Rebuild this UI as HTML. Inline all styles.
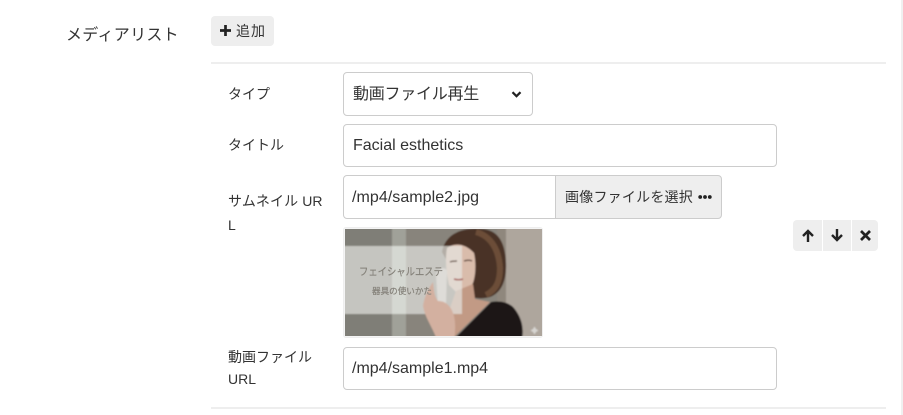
<!DOCTYPE html>
<html lang="ja"><head><meta charset="utf-8">
<style>
html,body{margin:0;padding:0;background:#fff}
body{width:903px;height:415px;position:relative;overflow:hidden;font-family:"Liberation Sans","Noto Sans CJK JP",sans-serif;color:#333}
.a{position:absolute;box-sizing:border-box;white-space:nowrap}
.l{font-size:14px;line-height:24px;left:228px}
.box{border:1px solid #ccc;border-radius:4px;background:#fff;font-size:16px;color:#333;padding-left:9px;display:flex;align-items:center}
svg{display:block}
</style></head><body>
<div class="a" style="left:901px;top:0;width:2px;height:415px;background:#f0f0f0"></div>
<div class="a" style="left:66px;top:24px;font-size:16px;line-height:24px;letter-spacing:.3px">メディアリスト</div>
<div class="a" style="left:211px;top:16px;width:63px;height:30px;background:#eee;border-radius:4px"></div>
<svg class="a" style="left:219px;top:24px" width="13" height="13" viewBox="0 0 13 13"><path d="M6.500 1v11M1 6.500h11" stroke="#222" stroke-width="2.700" fill="none"/></svg>
<div class="a" style="left:236px;top:20px;font-size:14px;line-height:22px;letter-spacing:1px">追加</div>
<div class="a" style="left:211px;top:62px;width:675px;height:2px;background:#eee"></div>

<div class="a l" style="top:82px">タイプ</div>
<div class="a box" style="left:343px;top:72px;width:190px;height:44px;padding-bottom:4px;letter-spacing:-.25px">動画ファイル再生</div>
<svg class="a" style="left:511px;top:90px" width="11" height="9" viewBox="0 0 11 9"><path d="M1.500 2.200l4 4 4-4" stroke="#222" stroke-width="2.200" fill="none"/></svg>

<div class="a l" style="top:133px">タイトル</div>
<div class="a box" style="left:343px;top:124px;width:434px;height:43px">Facial esthetics</div>

<div class="a l" style="top:189px;letter-spacing:.1px">サムネイル UR</div>
<div class="a l" style="top:213px">L</div>
<div class="a box" style="left:343px;top:175px;width:213px;height:44px;border-radius:4px 0 0 4px;padding-left:8px;padding-top:2px;letter-spacing:.05px">/mp4/sample2.jpg</div>
<div class="a box" style="left:555px;top:175px;width:167px;height:44px;background:#eee;border-radius:0 4px 4px 0;font-size:14px;letter-spacing:.22px">画像ファイルを選択</div>
<svg class="a" style="left:698px;top:193px" width="14" height="8" viewBox="0 0 14 8"><circle cx="2.200" cy="4" r="1.900" fill="#222"/><circle cx="7" cy="4" r="1.900" fill="#222"/><circle cx="11.800" cy="4" r="1.900" fill="#222"/></svg>

<div class="a" style="left:343px;top:227px;width:200px;height:111px;border:1px solid #eee;border-radius:3px;background:#fff;box-shadow:inset 0 0 0 1px #f4f4f4"></div>
<svg class="a" style="left:345px;top:229px" width="197" height="107" viewBox="345 229 197 107" font-family="'Liberation Sans','Noto Sans CJK JP',sans-serif">
<defs><filter id="b" x="-5%" y="-5%" width="110%" height="110%"><feGaussianBlur stdDeviation="0.7"/></filter><filter id="t"><feGaussianBlur stdDeviation="0.2"/></filter></defs>
<g filter="url(#b)">
<rect x="340" y="225" width="210" height="115" fill="#88847c"/>
<rect x="340" y="225" width="52" height="115" fill="#7f7e77"/>
<rect x="392" y="225" width="14" height="115" fill="#a0a199"/>
<rect x="497" y="225" width="10" height="115" fill="#8f877d"/>
<rect x="506" y="225" width="40" height="115" fill="#aea69d"/>
<path d="M442 252C445 234 462 227 482 229C498 230 505 242 506 262C507 281 501 293 490 297C480 300 470 298 464 292Z" fill="#4a3326"/>
<path d="M476 232C491 236 499 250 500 268C500 282 496 290 486 295" stroke="#78583f" stroke-width="6" fill="none" opacity=".75"/>
<path d="M447 248C455 242 466 244 474 253C476 262 476 274 473 283C468 291 461 294 456 292L449 285C446 272 445 258 447 248Z" fill="#d9bcab"/>
<path d="M456 291L473 284L475 299L490 302L455 336H440Z" fill="#c29a85"/>
<path d="M456 337L491 302C500 300 510 303 514 308C522 318 524 328 522 340H452Z" fill="#1b1918"/>
<rect x="340" y="246" width="122" height="68" fill="#e6e8e3" opacity=".68"/>
<rect x="392" y="246" width="14" height="68" fill="#f2f4f0" opacity=".2"/>
<path d="M436 274L439 270C443 267 447 268 447 272L446 305L438 308Z" fill="#dedcd8"/>
<path d="M423 306C424 298 428 289 433 282C434 290 434 296 438 301C445 301 451 305 454 316C456 324 455 334 454 340H437C433 328 425 318 423 306Z" fill="#d3b0a0"/>
<path d="M450 262c2-1 5-1 7-1M464 261c3-1 6-1 8 0" stroke="#5a4236" stroke-width="1.300" fill="none"/>
<path d="M454 279c3 1 6 1 9 0" stroke="#a8645e" stroke-width="1.500" fill="none"/>
<path d="M533 329l1.500-2.500 1.500 2.500 2.500 1.500-2.500 1.500-1.500 2.500-1.500-2.500-2.500-1.500z" fill="#d8d6d2"/>
</g>
<g filter="url(#t)" fill="#85827a" stroke="#85827a" stroke-width=".2">
<text x="359" y="275" font-size="10.500" textLength="84" lengthAdjust="spacingAndGlyphs">フェイシャルエステ</text>
<text x="372" y="294" font-size="8.800" textLength="60" lengthAdjust="spacingAndGlyphs">器具の使いかた</text>
</g>
</svg>

<div class="a" style="left:793px;top:220px;width:85px;height:31px;background:#eee;border-radius:4px"></div>
<div class="a" style="left:822px;top:220px;width:1px;height:31px;background:#fff"></div>
<div class="a" style="left:851px;top:220px;width:1px;height:31px;background:#fff"></div>
<svg class="a" style="left:801px;top:229px" width="14" height="14" viewBox="0 0 14 14"><path d="M7 13V2.500M2 7l5-5 5 5" stroke="#222" stroke-width="2.400" fill="none"/></svg>
<svg class="a" style="left:830px;top:228px" width="14" height="14" viewBox="0 0 14 14"><path d="M7 1v10.500M2 7l5 5 5-5" stroke="#222" stroke-width="2.400" fill="none"/></svg>
<svg class="a" style="left:859px;top:229px" width="13" height="13" viewBox="0 0 13 13"><path d="M2 2l9 9M11 2l-9 9" stroke="#222" stroke-width="2.700" fill="none"/></svg>

<div class="a l" style="top:345px">動画ファイル</div>
<div class="a l" style="top:367px">URL</div>
<div class="a box" style="left:343px;top:347px;width:434px;height:43px;padding-left:8px">/mp4/sample1.mp4</div>
<div class="a" style="left:211px;top:407px;width:675px;height:2px;background:#eee"></div>
</body></html>
